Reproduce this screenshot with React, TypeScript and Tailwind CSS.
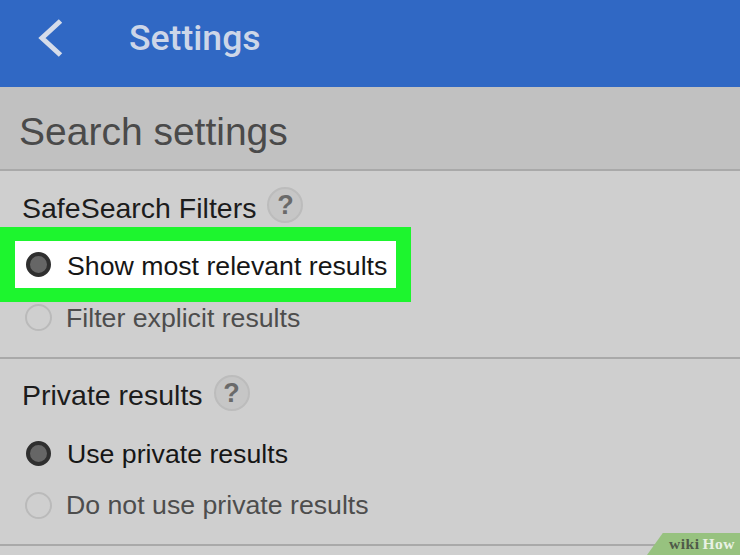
export default function App() {
  const Help = ({ low }: { low?: boolean }) => (
    <span className={low ? "-mt-[4px] flex h-[36px] w-[36px] items-center justify-center rounded-full border-2 border-[#bcbcbc] bg-[#c6c6c6] text-[27px] font-bold leading-none text-[#6a6a6a]" : "-mt-[6px] flex h-[36px] w-[36px] items-center justify-center rounded-full border-2 border-[#bcbcbc] bg-[#c6c6c6] text-[27px] font-bold leading-none text-[#6a6a6a]"}>?</span>
  );
  const Radio = ({ on }: { on?: boolean }) =>
    on ? (
      <span className="ml-[1px] h-[25px] w-[25px] shrink-0 rounded-full border-[4px] border-[#2f2f2f] bg-[#666666]" />
    ) : (
      <span className="h-[27px] w-[27px] shrink-0 rounded-full border-2 border-[#bababa] bg-[#cfcfcf]" />
    );
  return (
    <div className="relative h-[555px] w-[740px] overflow-hidden bg-[#cfcfcf] font-['Liberation_Sans',sans-serif]">
      <header className="flex h-[87px] items-center bg-[#3068c4] pb-[12px] pl-[38px]">
        <svg width="26" height="38" viewBox="0 0 26 38" fill="none" stroke="#d5dcea" strokeWidth="5">
          <path d="M22.5 2 L4 19 L22.5 36" />
        </svg>
        <span className="ml-[65px] pt-[3px] font-['Roboto',sans-serif] text-[35.6px] font-medium leading-none text-[#cdd6e8]">Settings</span>
      </header>
      <div className="flex h-[84px] items-center border-b-2 border-[#a9a9a9] bg-[#c1c1c1] pl-[19px] pt-[8px] text-[39px] text-[#4a4a4a]">
        Search settings
      </div>
      <section className="h-[188px] border-b-2 border-[#a9a9a9]">
        <div className="flex h-[56px] items-center gap-[11px] pl-[22px] pt-[18px] text-[28.5px] text-[#1c1c1c]">
          <span>SafeSearch Filters</span>
          <Help />
        </div>
        <div className="flex h-[75px] w-[411px] items-center border-x-[15px] border-y-[14px] border-[#1df52e] bg-white pl-[10px] text-[26.7px] text-[#161616]">
          <Radio on />
          <span className="ml-[16px] pt-[3px]">Show most relevant results</span>
        </div>
        <div className="flex h-[31px] items-center pl-[25px] text-[26.7px] text-[#4d4d4d]">
          <Radio />
          <span className="ml-[14px] pt-[2px]">Filter explicit results</span>
        </div>
      </section>
      <section className="h-[187px] border-b-2 border-[#a9a9a9]">
        <div className="flex h-[72px] items-center gap-[11px] pl-[22px] text-[28.5px] text-[#1c1c1c]">
          <span>Private results</span>
          <Help low />
        </div>
        <div className="flex h-[44px] items-center pl-[25px] text-[26.7px] text-[#161616]">
          <Radio on />
          <span className="ml-[16px] pt-[2px]">Use private results</span>
        </div>
        <div className="mt-[8px] flex h-[44px] items-center pl-[25px] text-[26.7px] text-[#4d4d4d]">
          <Radio />
          <span className="ml-[14px]">Do not use private results</span>
        </div>
      </section>
      <div className="absolute bottom-0 right-0 flex h-[22px] w-[93px] items-center justify-end gap-[3px] bg-[#97c27f] pr-[5px] font-['Liberation_Serif',serif] text-[15.5px] font-bold tracking-[0.5px] [clip-path:polygon(17%_0,100%_0,100%_100%,0_100%)]">
        <span className="text-[#4f5a49]">wiki</span>
        <span className="text-[#e9f1e4]">How</span>
      </div>
    </div>
  );
}
